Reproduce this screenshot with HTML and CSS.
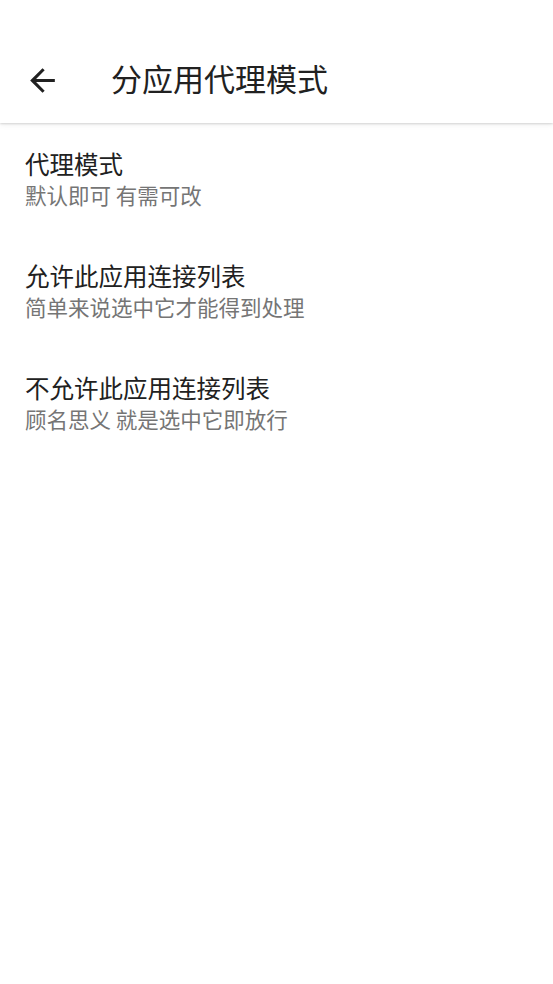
FILE: index.html
```html
<!DOCTYPE html>
<html lang="zh">
<head>
<meta charset="utf-8">
<link rel="stylesheet" href="styles.css">
</head>
<body>
<header class="toolbar">
  <div class="bar">
    <svg class="back" viewBox="0 0 24 24" width="37" height="37"><path d="M20 11H7.83l5.59-5.59L12 4l-8 8 8 8 1.41-1.41L7.83 13H20v-2z" fill="#212121"/></svg>
    <h1 class="title">分应用代理模式</h1>
  </div>
</header>
<main class="list">
  <div class="item">
    <div class="item-title">代理模式</div>
    <div class="item-sub">默认即可 有需可改</div>
  </div>
  <div class="item">
    <div class="item-title">允许此应用连接列表</div>
    <div class="item-sub">简单来说选中它才能得到处理</div>
  </div>
  <div class="item">
    <div class="item-title">不允许此应用连接列表</div>
    <div class="item-sub">顾名思义 就是选中它即放行</div>
  </div>
</main>
</body>
</html>
```
FILE: styles.css
```css
html, body {
  margin: 0;
  padding: 0;
  background: #ffffff;
  font-family: "Noto Sans CJK SC", "Noto Sans", Roboto, sans-serif;
}
.toolbar {
  height: 123px;
  box-sizing: border-box;
  padding-top: 37px;
  background: #ffffff;
  box-shadow: 0 1px 2px rgba(0,0,0,0.14), 0 2px 6px rgba(0,0,0,0.06);
}
.bar {
  height: 86px;
  display: flex;
  align-items: center;
}
.back {
  margin-left: 24px;
  display: block;
}
.title {
  margin: 0 0 4px 50px;
  font-size: 31px;
  font-weight: 400;
  color: #212121;
  line-height: 40px;
}
.list {
  display: flex;
  flex-direction: column;
}
.item {
  height: 112px;
  box-sizing: border-box;
  padding: 25px 25px 0;
}
.item-title {
  font-size: 24.5px;
  line-height: 32px;
  color: #212121;
}
.item-sub {
  font-size: 21.5px;
  line-height: 32px;
  color: #757575;
  margin-top: -1px;
}
```
